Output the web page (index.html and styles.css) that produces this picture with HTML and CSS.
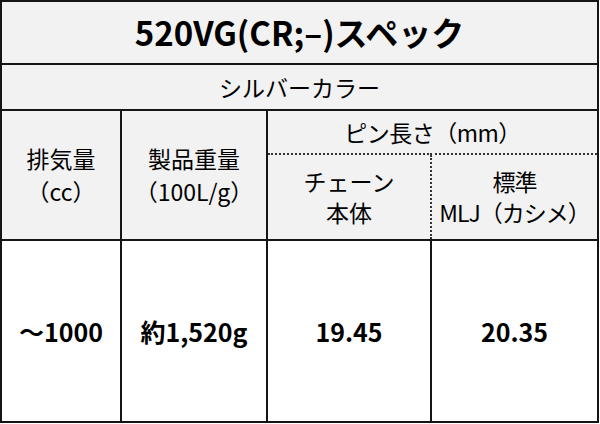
FILE: index.html
```html
<!DOCTYPE html>
<html lang="ja">
<head>
<meta charset="utf-8">
<link rel="stylesheet" href="styles.css">
</head>
<body>
<table class="spec">
  <colgroup>
    <col class="c1"><col class="c2"><col class="c3"><col class="c4">
  </colgroup>
  <tr class="r-title">
    <td colspan="4" class="title">520VG(CR;&#8211;)スペック</td>
  </tr>
  <tr class="r-color">
    <td colspan="4" class="color">シルバーカラー</td>
  </tr>
  <tr class="r-head1">
    <td rowspan="2" class="head">排気量<br>（cc）</td>
    <td rowspan="2" class="head">製品重量<br>（100L/g）</td>
    <td colspan="2" class="head pin">ピン長さ（mm）</td>
  </tr>
  <tr class="r-head2">
    <td class="head sub left">チェーン<br>本体</td>
    <td class="head sub right">標準<br>MLJ（カシメ）</td>
  </tr>
  <tr class="r-data">
    <td class="data">～1000</td>
    <td class="data">約1,520g</td>
    <td class="data">19.45</td>
    <td class="data">20.35</td>
  </tr>
</table>
</body>
</html>
```
FILE: styles.css
```css
html, body {
  margin: 0;
  padding: 0;
  background: #ffffff;
}
body {
  font-family: "Noto Sans CJK JP", "Noto Sans", sans-serif;
  color: #000;
}
.spec {
  border-collapse: collapse;
  table-layout: fixed;
  width: 597px;
}
.c1 { width: 120px; }
.c2 { width: 146px; }
.c3 { width: 164px; }
.c4 { width: 167px; }
.spec td {
  border: 2px solid #151515;
  padding: 0;
  text-align: center;
  vertical-align: middle;
  background: #f2f2f2;
  white-space: nowrap;
}
.r-title { height: 63px; }
.r-color { height: 46px; }
.r-head1 { height: 44px; }
.r-head2 { height: 86px; }
.r-data { height: 182px; }
.title {
  font-size: 33px;
  font-weight: bold;
  line-height: 1;
}
.color {
  font-size: 23px;
  line-height: 1;
}
.head {
  font-size: 23px;
  line-height: 33px;
}
.spec td.pin {
  border-bottom: 2px dotted #333;
  letter-spacing: -0.5px;
}
.spec td.sub {
  border-top: 2px dotted #333;
  line-height: 31px;
}
.spec td.left { border-right: 2px dotted #333; }
.spec td.right {
  border-left: 2px dotted #333;
  letter-spacing: -1px;
}
.spec td.data {
  background: #ffffff;
  font-size: 25px;
  font-weight: bold;
  line-height: 1;
}
```
